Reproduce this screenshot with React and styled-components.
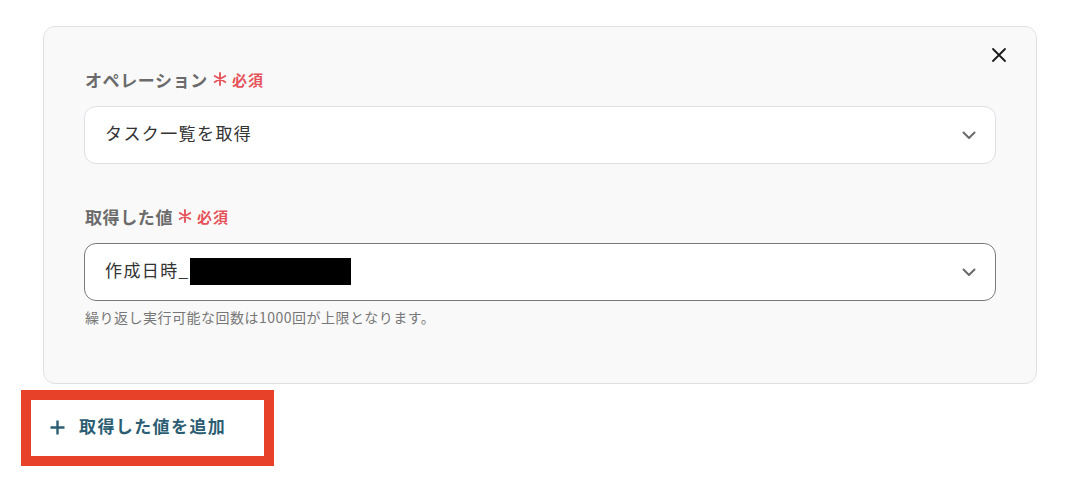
import React from 'react';
import styled, { createGlobalStyle } from 'styled-components';

const GlobalStyle = createGlobalStyle`
  html, body {
    margin: 0;
    padding: 0;
    background: #ffffff;
  }
  body {
    font-family: "Noto Sans CJK JP", "Noto Sans", sans-serif;
    color: #333333;
  }
`;

const Page = styled.div`
  width: 1068px;
  height: 486px;
  padding: 26px 0 0 21px;
  box-sizing: border-box;
  overflow: hidden;
`;

const Panel = styled.div`
  margin-left: 22px;
  width: 994px;
  box-sizing: border-box;
  background: #f9f9f9;
  border: 1px solid #e1e1e4;
  border-radius: 12px;
  padding: 16px 40px 57px 40px;
`;

const CloseRow = styled.div`
  display: flex;
  justify-content: flex-end;
  height: 24px;
  margin-right: -15px;
`;

const CloseButton = styled.button`
  width: 24px;
  height: 24px;
  padding: 0;
  border: none;
  background: transparent;
  display: flex;
  align-items: center;
  justify-content: center;
  cursor: pointer;
`;

const Field = styled.div`
  margin-top: ${p => p.$top}px;
`;

const Label = styled.div`
  display: flex;
  align-items: center;
  height: 20px;
  font-size: 17px;
  font-weight: 700;
  letter-spacing: 0.6px;
  color: #6b6b6b;
  margin-left: 1px;
`;

const Required = styled.span`
  display: inline-flex;
  align-items: center;
  gap: 5px;
  margin-left: 5px;
  color: #e5525a;
  font-size: 15px;
  font-weight: 700;
  letter-spacing: 1px;
`;

const Select = styled.div`
  margin-top: 17px;
  height: 58px;
  box-sizing: border-box;
  background: #ffffff;
  border: 1px solid ${p => (p.$active ? '#7a7a7a' : '#e0e0e6')};
  border-radius: 12px;
  display: flex;
  align-items: center;
  justify-content: space-between;
  padding: 0 19px 0 20px;
`;

const Value = styled.span`
  display: flex;
  align-items: center;
  padding-bottom: 5px;
  font-size: 17px;
  letter-spacing: 1.4px;
  color: #333333;
`;

const Redacted = styled.span`
  display: inline-block;
  width: 161px;
  height: 27px;
  margin-top: 4px;
  background: #000000;
`;

const Helper = styled.div`
  margin-top: 7px;
  font-size: 14px;
  line-height: 18px;
  letter-spacing: 0.5px;
  color: #777777;
  margin-left: 1px;
`;

const AddOutline = styled.div`
  margin-top: 6px;
  width: 253px;
  height: 76px;
  box-sizing: border-box;
  border: 10px solid #e8412a;
  background: #ffffff;
  display: flex;
  align-items: center;
  padding: 0 0 2px 19px;
`;

const AddButton = styled.button`
  display: flex;
  align-items: center;
  gap: 14px;
  border: none;
  background: transparent;
  padding: 0;
  font-family: inherit;
  font-size: 17px;
  font-weight: 700;
  letter-spacing: 1.4px;
  color: #2c5e73;
  cursor: pointer;
`;

const ButtonText = styled.span`
  padding-bottom: 4px;
`;

const XIcon = () => (
  <svg width="16" height="16" viewBox="0 0 16 16">
    <path d="M2 2 L14 14 M14 2 L2 14" stroke="#1a1a1a" strokeWidth="1.8" strokeLinecap="round" />
  </svg>
);

const Chevron = () => (
  <svg width="14" height="9" viewBox="0 0 14 9">
    <path d="M1.5 1.5 L7 7 L12.5 1.5" fill="none" stroke="#6a6a6a" strokeWidth="2" strokeLinecap="round" strokeLinejoin="round" />
  </svg>
);

const Asterisk = () => (
  <svg width="14" height="14" viewBox="0 0 12 12">
    <path d="M6 0.8 V11.2 M1.5 3.4 L10.5 8.6 M10.5 3.4 L1.5 8.6" stroke="#e5525a" strokeWidth="1.6" strokeLinecap="round" />
  </svg>
);

const Plus = () => (
  <svg width="15" height="15" viewBox="0 0 15 15">
    <path d="M7.5 0.5 V14.5 M0.5 7.5 H14.5" stroke="#2c5e73" strokeWidth="2.4" />
  </svg>
);

const RequiredMark = () => (
  <Required>
    <Asterisk />
    必須
  </Required>
);

const App = () => (
  <>
    <GlobalStyle />
    <Page>
      <Panel>
        <CloseRow>
          <CloseButton aria-label="close"><XIcon /></CloseButton>
        </CloseRow>
        <Field $top={2}>
          <Label>オペレーション<RequiredMark /></Label>
          <Select>
            <Value>タスク一覧を取得</Value>
            <Chevron />
          </Select>
        </Field>
        <Field $top={42}>
          <Label>取得した値<RequiredMark /></Label>
          <Select $active>
            <Value>作成日時_<Redacted /></Value>
            <Chevron />
          </Select>
          <Helper>繰り返し実行可能な回数は1000回が上限となります。</Helper>
        </Field>
      </Panel>
      <AddOutline>
        <AddButton><Plus /><ButtonText>取得した値を追加</ButtonText></AddButton>
      </AddOutline>
    </Page>
  </>
);

export default App;
